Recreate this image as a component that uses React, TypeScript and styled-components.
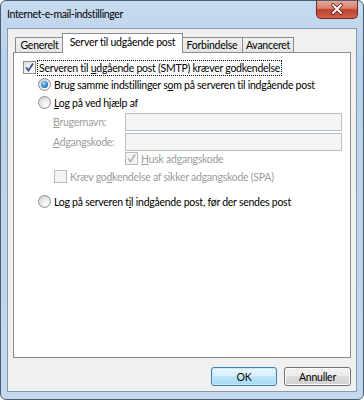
import React from "react";
import styled, { createGlobalStyle } from "styled-components";

const GlobalStyle = createGlobalStyle`
  body {
    margin: 0;
    background: #ffffff;
    font-family: Lato, "Liberation Sans", sans-serif;
    font-size: 10.5px;
    letter-spacing: -0.25px;
  }
`;

const Window = styled.div`
  width: 364px;
  height: 400px;
  box-sizing: border-box;
  border: 1px solid #4e5d6e;
  border-radius: 6px;
  background: linear-gradient(to bottom, #c6dbf0 0px, #b9d1ea 60px, #c3d8ee 100%);
  display: flex;
  flex-direction: column;
  overflow: hidden;
`;

const TitleBar = styled.div`
  height: 27px;
  flex: none;
  display: flex;
  align-items: flex-start;
`;

const Title = styled.div`
  padding: 7px 0 0 6px;
  font-size: 10.5px;
  letter-spacing: -0.35px;
  color: #000;
`;

const CloseButton = styled.div`
  margin-left: auto;
  margin-right: 5px;
  margin-top: -1px;
  width: 42px;
  height: 19px;
  box-sizing: border-box;
  border: 1px solid #6e2a22;
  border-top: none;
  border-radius: 0 0 5px 5px;
  background: linear-gradient(to bottom, #e9a99b 0%, #d9826f 45%, #c0422e 55%, #d0614b 100%);
  display: flex;
  align-items: center;
  justify-content: center;
`;

const Client = styled.div`
  flex: 1;
  margin: 0 6px 7px 6px;
  border: 1px solid #8499b2;
  background: #f0f0f0;
  padding: 4px 5px 5px 5px;
  display: flex;
  flex-direction: column;
`;

const TabStrip = styled.div`
  height: 20px;
  flex: none;
  display: flex;
  align-items: flex-end;
  padding-left: 2px;
  margin-bottom: -1px;
  position: relative;
  z-index: 1;
`;

const Tab = styled.div<{ $w: number; $active?: boolean; $overlap?: boolean }>`
  width: ${(p) => p.$w}px;
  box-sizing: border-box;
  height: ${(p) => (p.$active ? 20 : 15)}px;
  margin-bottom: ${(p) => (p.$active ? 0 : 1)}px;
  margin-left: ${(p) => (p.$active ? -2 : p.$overlap ? -1 : 0)}px;
  margin-right: ${(p) => (p.$active ? -2 : 0)}px;
  border: 1px solid #898c95;
  border-bottom: none;
  background: ${(p) =>
    p.$active ? "#ffffff" : "linear-gradient(to bottom, #f2f2f2, #e4e4e4)"};
  position: relative;
  z-index: ${(p) => (p.$active ? 2 : 1)};
  display: flex;
  align-items: center;
  justify-content: center;
  padding-bottom: ${(p) => (p.$active ? 3 : 0)}px;
  color: #000;
  white-space: nowrap;
`;

const Panel = styled.div`
  flex: 1;
  border: 1px solid #898c95;
  background: #ffffff;
  padding: 6px 8px 0 9px;
  display: flex;
  flex-direction: column;
`;

const Row = styled.div<{ $h?: number; $top?: number; $indent?: number }>`
  height: ${(p) => p.$h ?? 17}px;
  margin-top: ${(p) => p.$top ?? 0}px;
  margin-left: ${(p) => p.$indent ?? 0}px;
  display: flex;
  align-items: center;
  white-space: nowrap;
`;

const Label = styled.span<{ $disabled?: boolean; $focus?: boolean }>`
  margin-left: 2px;
  color: ${(p) => (p.$disabled ? "#9c9c9c" : "#000")};
  outline: ${(p) => (p.$focus ? "1px dotted #000" : "none")};
  padding: 0 1px;
  line-height: 14px;
`;

const U = styled.span`
  text-decoration: underline;
  text-underline-offset: 1px;
`;

const Box = styled.span<{ $disabled?: boolean }>`
  width: 13px;
  height: 13px;
  box-sizing: border-box;
  flex: none;
  border: 1px solid ${(p) => (p.$disabled ? "#bcbcbc" : "#8e8f8f")};
  background: ${(p) =>
    p.$disabled
      ? "#f4f4f4"
      : "linear-gradient(135deg, #dcdcdc 0%, #f4f4f4 60%, #ffffff 100%)"};
  display: flex;
  align-items: center;
  justify-content: center;
`;

const RadioCircle = styled.span`
  width: 13px;
  height: 13px;
  box-sizing: border-box;
  flex: none;
  border-radius: 50%;
  border: 1px solid #8e8f8f;
  background: radial-gradient(circle at 65% 70%, #ffffff 0%, #e6e6e6 50%, #c8c8c8 100%);
  display: flex;
  align-items: center;
  justify-content: center;
`;

const RadioDot = styled.span`
  width: 7px;
  height: 7px;
  border-radius: 50%;
  background: radial-gradient(circle at 40% 35%, #b8e3ff 0%, #3d8ee0 45%, #144f9c 100%);
`;

const FieldLabel = styled.span`
  width: 72px;
  flex: none;
  color: #9c9c9c;
`;

const Field = styled.div`
  width: 218px;
  height: 18px;
  box-sizing: border-box;
  border: 1px solid #b5bfca;
  background: #f4f4f4;
`;

const Footer = styled.div`
  height: 19px;
  flex: none;
  margin-top: 9px;
  display: flex;
  justify-content: flex-end;
  gap: 7px;
`;

const Button = styled.div<{ $default?: boolean }>`
  width: ${(p) => (p.$default ? 66 : 67)}px;
  box-sizing: border-box;
  height: 19px;
  border-radius: 3px;
  border: 1px solid ${(p) => (p.$default ? "#3c7fb1" : "#707070")};
  background: ${(p) =>
    p.$default
      ? "linear-gradient(to bottom, #eaf6fd 0%, #d9f0fc 50%, #bee6fd 50%, #a7d9f5 100%)"
      : "linear-gradient(to bottom, #f2f2f2 0%, #ebebeb 50%, #dddddd 50%, #cfcfcf 100%)"};
  box-shadow: inset 0 0 0 1px ${(p) => (p.$default ? "#c9eafc" : "#fcfcfc")};
  display: flex;
  align-items: center;
  justify-content: center;
  color: #000;
`;

const Check = ({ color }: { color: string }) => (
  <svg width="11" height="11" viewBox="0 0 11 11">
    <path d="M2 5.5 L4.5 8.5 L9 1.5" fill="none" stroke={color} strokeWidth="1.7" />
  </svg>
);

const CloseGlyph = () => (
  <svg width="14" height="12" viewBox="0 0 14 12">
    <path d="M3 2 L11 10 M11 2 L3 10" stroke="#5a1a12" strokeWidth="3.6" strokeLinecap="round" />
    <path d="M3 2 L11 10 M11 2 L3 10" stroke="#ffffff" strokeWidth="2" strokeLinecap="round" />
  </svg>
);

export default function App() {
  return (
    <>
      <GlobalStyle />
      <Window>
        <TitleBar>
          <Title>Internet-e-mail-indstillinger</Title>
          <CloseButton>
            <CloseGlyph />
          </CloseButton>
        </TitleBar>
        <Client>
          <TabStrip>
            <Tab $w={49}>Generelt</Tab>
            <Tab $w={121} $active>
              Server til udgående post
            </Tab>
            <Tab $w={62}>Forbindelse</Tab>
            <Tab $w={52} $overlap>
              Avanceret
            </Tab>
          </TabStrip>
          <Panel>
            <Row>
              <Box>
                <Check color="#3b4f8a" />
              </Box>
              <Label $focus>
                Serveren til <U>u</U>dgående post (SMTP) kræver godkendelse
              </Label>
            </Row>
            <Row $indent={15}>
              <RadioCircle>
                <RadioDot />
              </RadioCircle>
              <Label>
                Brug samme indstillinger s<U>o</U>m på serveren til indgående post
              </Label>
            </Row>
            <Row $indent={15} $top={1}>
              <RadioCircle />
              <Label>
                <U>L</U>og på ved hjælp af
              </Label>
            </Row>
            <Row $indent={30} $h={18} $top={2}>
              <FieldLabel>
                <U>B</U>rugernavn:
              </FieldLabel>
              <Field />
            </Row>
            <Row $indent={30} $h={18} $top={2}>
              <FieldLabel>
                <U>A</U>dgangskode:
              </FieldLabel>
              <Field />
            </Row>
            <Row $indent={102} $h={15}>
              <Box $disabled>
                <Check color="#b4b4b4" />
              </Box>
              <Label $disabled>
                <U>H</U>usk adgangskode
              </Label>
            </Row>
            <Row $indent={31} $top={2}>
              <Box $disabled />
              <Label $disabled>
                Kræv go<U>d</U>kendelse af sikker adgangskode (SPA)
              </Label>
            </Row>
            <Row $indent={15} $top={8}>
              <RadioCircle />
              <Label>
                Log på serveren t<U>i</U>l indgående post, før der sendes post
              </Label>
            </Row>
          </Panel>
          <Footer>
            <Button $default>OK</Button>
            <Button>Annuller</Button>
          </Footer>
        </Client>
      </Window>
    </>
  );
}
